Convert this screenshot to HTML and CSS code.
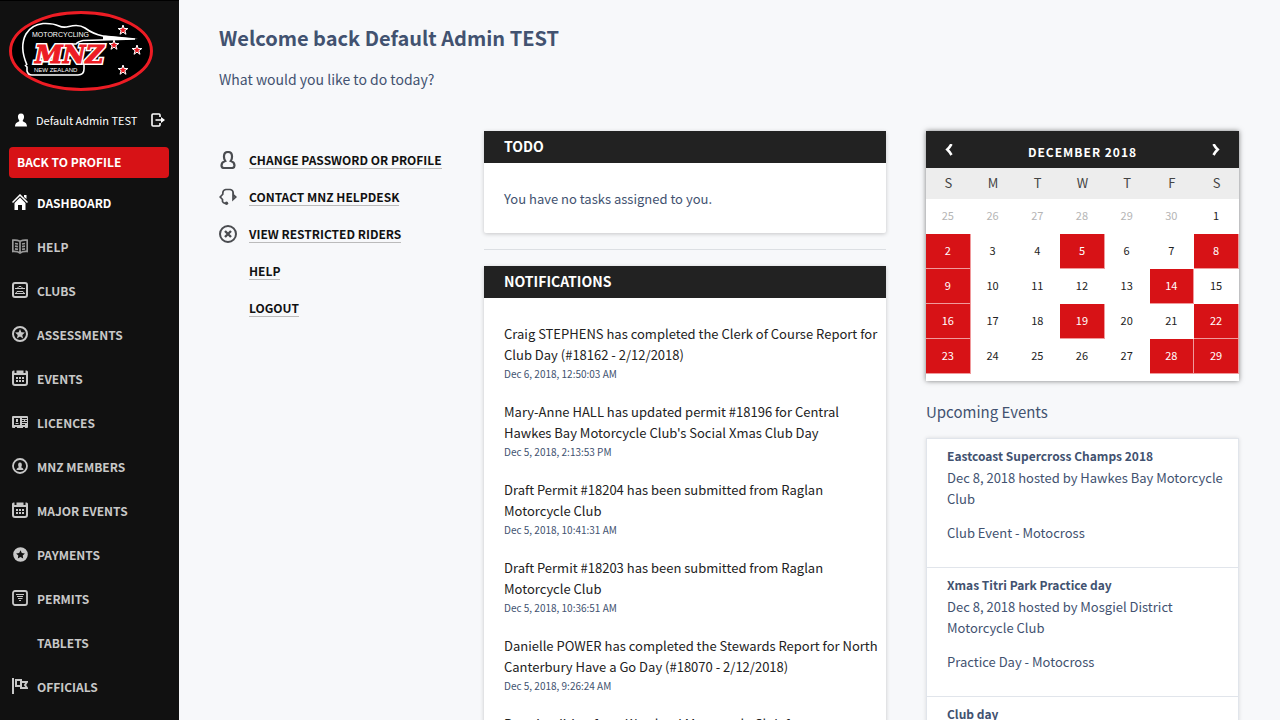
FILE: index.html
```html
<!DOCTYPE html>
<html lang="en">
<head>
<meta charset="utf-8">
<meta name="viewport" content="width=device-width, initial-scale=1">
<title>MNZ Dashboard</title>
<link rel="stylesheet" href="styles.css">
</head>
<body>
<svg class="sprite" aria-hidden="true">
  <symbol id="i-home" viewBox="0 0 16 16"><path fill="currentColor" d="M8 3.500 2.500 9v7H6v-5h4v5h3.500V9z"/><path fill="none" stroke="currentColor" stroke-width="1.500" d="M.5 8.500 8 1l7.500 7.500"/><path fill="currentColor" d="M12 1h2.500v4L12 3z"/></symbol>
  <symbol id="i-book" viewBox="0 0 16 16"><path fill="none" stroke="currentColor" stroke-width="1.700" d="M.8 2.200c3-.4 5 0 7.200 1 2.200-1 4.200-1.400 7.200-1V13.500c-3-.3-5 0-7.200 1.500-2.200-1.500-4.200-1.800-7.200-1.500zM8 3v12M3 5.500l3 .5M3 8.200l3 .5M3 10.900l3 .5M13 5.500l-3 .5M13 8.200l-3 .5M13 10.900l-3 .5"/></symbol>
  <symbol id="i-clubs" viewBox="0 0 16 16"><rect x="1" y="1" width="14" height="14" rx="2" fill="none" stroke="currentColor" stroke-width="2"/><path fill="none" stroke="currentColor" d="M3 6.500h10M5.500 6 7 4.500h2L10.500 6M3 11.500h10M4 11l1-1.500h6l1 1.500"/></symbol>
  <symbol id="i-star" viewBox="0 0 16 16"><circle cx="8" cy="8" r="7" fill="none" stroke="currentColor" stroke-width="2"/><path fill="currentColor" d="m8 3 1.400 3.200 3.500.4-2.600 2.300.8 3.500L8 10.600l-3.100 1.800.8-3.500-2.600-2.300 3.500-.4z"/></symbol>
  <symbol id="i-cal" viewBox="0 0 16 16"><path fill="none" stroke="currentColor" stroke-width="2" d="M1 3v10q0 2 2 2h10q2 0 2-2V3"/><path fill="currentColor" d="M0 2q0-1.500 1.500-1.500h1V3h2V.5h7V3h2V.5h1Q16 .5 16 2v3H0z"/><path fill="none" stroke="currentColor" stroke-width="2" stroke-dasharray="2 1" d="M4 8h8M4 11h8"/></symbol>
  <symbol id="i-card" viewBox="0 0 16 16"><path fill="currentColor" fill-rule="evenodd" d="M1 2h14q1 0 1 1v10q0 1-1 1h-2v-1h-2v1H5v-1H3v1H1q-1 0-1-1V3q0-1 1-1zm1 2v7h6V4zm8 0v1h5V4zm0 2v1h2V6zm3 0v1h2V6zm-3 2v1h5V8zm0 2v1h3v-1z"/><path fill="currentColor" d="M4 5h2v3H4zM3.500 9h3v1h-3z"/></symbol>
  <symbol id="i-member" viewBox="0 0 16 16"><circle cx="8" cy="8" r="7" fill="none" stroke="currentColor" stroke-width="1.800"/><path fill="currentColor" d="M8 4.500c1.700 0 2 1.500 1.800 3-.1.800-.5 1.100-.5 2 1 .5 2.200.7 2.200 2.500h-7c0-1.800 1.200-2 2.200-2.500 0-.9-.4-1.200-.5-2C6 6 6.300 4.500 8 4.500z"/></symbol>
  <symbol id="i-pay" viewBox="0 0 16 16"><path fill="currentColor" fill-rule="evenodd" d="M8.500 1.200a7.300 7.300 0 1 1 0 14.600 7.300 7.300 0 0 1 0-14.600zm0 3L7.200 7l-3.100.4 2.200 2.100-.5 3.100 2.700-1.500 2.700 1.500-.5-3.100 2.200-2.100L9.800 7z"/></symbol>
  <symbol id="i-permit" viewBox="0 0 16 16"><rect x="1" y="1" width="14" height="14" rx="2" fill="none" stroke="currentColor" stroke-width="1.800"/><path stroke="currentColor" d="M4 4.500h8M5 6.500h6M6 8.500h4.500M7 10.500h2"/></symbol>
  <symbol id="i-flag" viewBox="0 0 16 16"><path fill="none" stroke="currentColor" stroke-width="2" d="M1 0v16M4 2h5v6H4zM9 4h6l-2 3 2 3H9V4"/></symbol>
  <symbol id="i-user" viewBox="0 0 14 14"><path fill="currentColor" d="M7 .5c2.500 0 3.300 1.800 3 4-.2 1.500-.8 2.200-1.200 2.800v1C10 9.300 13 9.600 13 13.500H1c0-3.900 3-4.200 4.200-5.200v-1C4.800 6.700 4.200 6 4 4.500c-.3-2.200.5-4 3-4z"/></symbol>
  <symbol id="i-exit" viewBox="0 0 14 14"><path fill="none" stroke="currentColor" stroke-width="1.600" d="M9 4V2q0-1-1-1H2Q1 1 1 2v10q0 1 1 1h6q1 0 1-1v-2"/><path fill="currentColor" d="M4.500 6.200h5.500V4l4 3-4 3V7.800H4.500z"/></symbol>
  <symbol id="i-person" viewBox="0 0 18 18"><path fill="none" stroke="currentColor" stroke-width="2.200" d="M6.200 10Q4.800 8 5 5q.2-4 4-4t4 4q.2 3-1.200 5 3.700 1.200 3.700 4.500Q15.500 17 13 17H5q-2.500 0-2.500-2.500Q2.500 11.200 6.200 10z"/></symbol>
  <symbol id="i-headset" viewBox="0 0 18 18"><path fill="none" stroke="currentColor" stroke-width="1.700" d="M3.800 6.500V5q0-3 3-3.500h4.400q3 .5 3 3.500v1.500M4 6 1.200 9 4 12M14 6.500v5L16.800 9zM3.500 12v1.500Q4 15 6 15.300"/><circle cx="7.500" cy="15.300" r="1.700" fill="currentColor"/></symbol>
  <symbol id="i-cross" viewBox="0 0 18 18"><circle cx="9" cy="9" r="8" fill="none" stroke="currentColor" stroke-width="2"/><path stroke="currentColor" stroke-width="2.400" d="m6 6 6 6M12 6l-6 6"/></symbol>
  <symbol id="i-prev" viewBox="0 0 8 12"><path fill="none" stroke="currentColor" stroke-width="2.600" d="M6.500 0Q4.500 3.500 2.300 5.500q2.200 2 4.200 5.500"/></symbol>
  <symbol id="i-next" viewBox="0 0 8 12"><path fill="none" stroke="currentColor" stroke-width="2.600" d="M1.500 0q2 3.500 4.200 5.500-2.200 2-4.200 5.500"/></symbol>
</svg>

<div class="app">
  <aside class="sidebar">
    <svg class="logo" viewBox="0 0 144 80" role="img" aria-label="Motorcycling New Zealand">
      <ellipse cx="72" cy="40" rx="70.500" ry="38.500" fill="#000" stroke="#ed1c24" stroke-width="3"/>
      <path fill="none" stroke="#fff" stroke-width="1.600" d="M18 54Q10 36 17 23 22 14 34 12.500q10-.5 16 2.500 4 2 10 .5 10-2.500 16 1.500 8 6 18 8l32 3-52 1.500q-5 1-7 3.500h-7M16 54l2 2v4q1 4 5 4h46q6 0 6-6v-4"/>
      <path fill="#fff" d="m94 24.500 35 3.500-35 1z"/>
      <text class="logo-small" x="23" y="26">MOTORCYCLING</text>
      <text class="logo-small logo-tiny" x="25" y="61">NEW ZEALAND</text>
      <text class="logo-main logo-edge" x="26" y="52">MNZ</text>
      <text class="logo-main" x="26" y="52" aria-hidden="true">MNZ</text>
      <g fill="#ed1c24" stroke="#fff">
        <path id="star" d="m114 14 1.200 3.500h3.700l-3 2.200 1.100 3.600-3-2.200-3 2.200 1.100-3.600-3-2.200h3.700z"/>
        <use href="#star" x="-9" y="15"/><use href="#star" x="14" y="20"/><use href="#star" y="40"/>
      </g>
    </svg>
    <div class="user">
      <svg class="user-icon"><use href="#i-user"/></svg>
      <span class="user-name">Default Admin TEST</span>
      <a href="#" class="exit" aria-label="Log out"><svg class="user-icon"><use href="#i-exit"/></svg></a>
    </div>
    <a href="#" class="back">BACK TO PROFILE</a>
    <nav class="nav">
      <a href="#" class="nav-item current"><svg class="icon"><use href="#i-home"/></svg>DASHBOARD</a>
      <a href="#" class="nav-item"><svg class="icon dim"><use href="#i-book"/></svg>HELP</a>
      <a href="#" class="nav-item"><svg class="icon"><use href="#i-clubs"/></svg>CLUBS</a>
      <a href="#" class="nav-item"><svg class="icon"><use href="#i-star"/></svg>ASSESSMENTS</a>
      <a href="#" class="nav-item"><svg class="icon"><use href="#i-cal"/></svg>EVENTS</a>
      <a href="#" class="nav-item"><svg class="icon"><use href="#i-card"/></svg>LICENCES</a>
      <a href="#" class="nav-item"><svg class="icon"><use href="#i-member"/></svg>MNZ MEMBERS</a>
      <a href="#" class="nav-item"><svg class="icon"><use href="#i-cal"/></svg>MAJOR EVENTS</a>
      <a href="#" class="nav-item"><svg class="icon"><use href="#i-pay"/></svg>PAYMENTS</a>
      <a href="#" class="nav-item"><svg class="icon"><use href="#i-permit"/></svg>PERMITS</a>
      <a href="#" class="nav-item"><span class="icon"></span>TABLETS</a>
      <a href="#" class="nav-item"><svg class="icon"><use href="#i-flag"/></svg>OFFICIALS</a>
    </nav>
  </aside>

  <main class="main">
    <h1 class="title">Welcome back Default Admin TEST</h1>
    <p class="lead">What would you like to do today?</p>
    <div class="columns">
      <ul class="links">
        <li class="link-row"><svg class="link-icon"><use href="#i-person"/></svg><a href="#" class="link">CHANGE PASSWORD OR PROFILE</a></li>
        <li class="link-row"><svg class="link-icon"><use href="#i-headset"/></svg><a href="#" class="link">CONTACT MNZ HELPDESK</a></li>
        <li class="link-row"><svg class="link-icon"><use href="#i-cross"/></svg><a href="#" class="link">VIEW RESTRICTED RIDERS</a></li>
        <li class="link-row"><span class="link-icon"></span><a href="#" class="link">HELP</a></li>
        <li class="link-row"><span class="link-icon"></span><a href="#" class="link">LOGOUT</a></li>
      </ul>

      <div class="feed">
        <section class="card">
          <h2 class="card-title">TODO</h2>
          <div class="card-body"><p class="text">You have no tasks assigned to you.</p></div>
        </section>
        <hr class="rule">
        <section class="card">
          <h2 class="card-title">NOTIFICATIONS</h2>
          <div class="card-body notes">
            <article><p class="note">Craig STEPHENS has completed the Clerk of Course Report for Club Day (#18162 - 2/12/2018)</p><p class="date">Dec 6, 2018, 12:50:03 AM</p></article>
            <article><p class="note">Mary-Anne HALL has updated permit #18196 for Central Hawkes Bay Motorcycle Club's Social Xmas Club Day</p><p class="date">Dec 5, 2018, 2:13:53 PM</p></article>
            <article><p class="note">Draft Permit #18204 has been submitted from Raglan Motorcycle Club</p><p class="date">Dec 5, 2018, 10:41:31 AM</p></article>
            <article><p class="note">Draft Permit #18203 has been submitted from Raglan Motorcycle Club</p><p class="date">Dec 5, 2018, 10:36:51 AM</p></article>
            <article><p class="note">Danielle POWER has completed the Stewards Report for North Canterbury Have a Go Day (#18070 - 2/12/2018)</p><p class="date">Dec 5, 2018, 9:26:24 AM</p></article>
            <article><p class="note">Permit edition from Westland Motorcycle Club for</p></article>
          </div>
        </section>
      </div>

      <div class="agenda">
        <section class="calendar">
          <header class="cal-head">
            <button type="button" class="cal-btn" aria-label="Previous month"><svg class="arrow"><use href="#i-prev"/></svg></button>
            <h2 class="cal-title">DECEMBER 2018</h2>
            <button type="button" class="cal-btn" aria-label="Next month"><svg class="arrow"><use href="#i-next"/></svg></button>
          </header>
          <table class="days">
            <thead><tr><th>S</th><th>M</th><th>T</th><th>W</th><th>T</th><th>F</th><th>S</th></tr></thead>
            <tbody>
              <tr><td class="out">25</td><td class="out">26</td><td class="out">27</td><td class="out">28</td><td class="out">29</td><td class="out">30</td><td>1</td></tr>
              <tr><td class="on">2</td><td>3</td><td>4</td><td class="on">5</td><td>6</td><td>7</td><td class="on">8</td></tr>
              <tr><td class="on">9</td><td>10</td><td>11</td><td>12</td><td>13</td><td class="on">14</td><td>15</td></tr>
              <tr><td class="on">16</td><td>17</td><td>18</td><td class="on">19</td><td>20</td><td>21</td><td class="on">22</td></tr>
              <tr><td class="on">23</td><td>24</td><td>25</td><td>26</td><td>27</td><td class="on">28</td><td class="on">29</td></tr>
            </tbody>
          </table>
        </section>
        <h2 class="upcoming">Upcoming Events</h2>
        <div class="events">
          <article class="event"><h3 class="event-title">Eastcoast Supercross Champs 2018</h3><p class="text">Dec 8, 2018 hosted by Hawkes Bay Motorcycle Club</p><p class="text kind">Club Event - Motocross</p></article>
          <article class="event"><h3 class="event-title">Xmas Titri Park Practice day</h3><p class="text">Dec 8, 2018 hosted by Mosgiel District Motorcycle Club</p><p class="text kind">Practice Day - Motocross</p></article>
          <article class="event"><h3 class="event-title">Club day</h3></article>
        </div>
      </div>
    </div>
  </main>
</div>
</body>
</html>
```
FILE: styles.css
```css
* { box-sizing: border-box; }
body, h1, h2, h3, p, ul { margin: 0; padding: 0; }
body {
  font: 13px/21px "Noto Sans CJK SC", "Noto Sans", sans-serif;
  color: #425270;
  background: #f7f8fa;
}
a { color: inherit; text-decoration: none; }
svg { display: block; }
.sprite { position: absolute; width: 0; height: 0; }

.app { display: flex; height: 100vh; overflow: hidden; }

/* Sidebar */
.sidebar {
  flex: 0 0 179px;
  padding: 10px 10px 0 9px;
  background: #111;
  border-top: 1px solid #000;
  overflow: hidden;
}
.logo { width: 144px; height: 80px; }
.logo-small { font: 7px "Liberation Sans", sans-serif; fill: #fff; }
.logo-tiny { font-size: 6px; }
.logo-main {
  font: italic bold 25px "DejaVu Serif", serif;
  fill: #ed1c24;
  stroke: #ed1c24;
  stroke-width: 1px;
}
.logo-edge { stroke: #fff; stroke-width: 4px; }
.user {
  display: flex;
  align-items: center;
  height: 32px;
  margin: 13px 4px 11px 5px;
  font-size: 11px;
  color: #fff;
}
.user-icon { width: 14px; height: 14px; }
.user-name { margin-left: 8px; }
.exit { margin-left: auto; }
.back {
  display: block;
  padding: 0 8px 2px;
  font-size: 12px;
  font-weight: 700;
  line-height: 29px;
  color: #fff;
  background: #d71216;
  border-radius: 4px;
}
.nav { padding: 3px 0 0 3px; }
.nav-item {
  display: flex;
  align-items: center;
  gap: 9px;
  height: 44px;
  padding-bottom: 2px;
  font-size: 12px;
  font-weight: 700;
  color: #c8c8c8;
}
.icon { width: 16px; height: 16px; }
.dim { color: #999; }
.current { color: #fff; }

/* Main area */
.main { flex: 1; min-width: 0; padding: 23px 41px 0 40px; }
.title { font-size: 20px; line-height: 30px; }
.lead { margin-top: 14px; font-size: 14px; line-height: 24px; }
.columns {
  display: grid;
  grid-template-columns: minmax(0, 225fr) minmax(0, 402fr) minmax(0, 313fr);
  gap: 40px;
  align-items: start;
  margin-top: 40px;
}
.links { padding-top: 10px; list-style: none; }
.link-row { display: flex; align-items: center; gap: 12px; height: 37px; }
.link-icon { flex: none; width: 18px; height: 18px; color: #4a4c50; }
.link {
  padding-top: 1px;
  font-size: 12px;
  font-weight: 700;
  line-height: 17px;
  white-space: nowrap;
  color: #111;
  border-bottom: 1px solid #bbb;
}

.card {
  background: #fff;
  border-radius: 2px;
  box-shadow: 0 1px 4px rgba(0, 0, 0, 0.2);
}
.card-title {
  padding: 0 20px 2px;
  font-size: 14px;
  line-height: 30px;
  color: #fff;
  background: #222;
}
.card-body { padding: 25px 4px 24px 20px; }
.rule { height: 1px; margin: 16px 0; border: 0; background: #dcdfe3; }
.notes { display: grid; gap: 19px; }
.note { color: #222; }
.date { margin-top: 1px; font-size: 10px; line-height: 16px; }

/* Calendar */
.calendar {
  padding-bottom: 7px;
  background: #fff;
  box-shadow: 0 0 5px rgba(0, 0, 0, 0.5);
}
.cal-head {
  display: flex;
  align-items: center;
  justify-content: space-between;
  height: 37px;
  color: #fff;
  background: #222;
}
.cal-title { padding-top: 4px; font-size: 12px; letter-spacing: 1px; }
.cal-btn {
  display: grid;
  place-items: center;
  width: 46px;
  height: 37px;
  padding: 0;
  color: inherit;
  background: none;
  border: 0;
}
.arrow { width: 8px; height: 12px; }
.days {
  width: 100%;
  table-layout: fixed;
  border-collapse: separate;
  border-spacing: 0;
  text-align: center;
}
.days th {
  height: 31px;
  padding: 0 0 2px;
  font-size: 13px;
  font-weight: 400;
  color: #444;
  background: #ededed;
}
.days td {
  height: 35px;
  padding: 0 0 2px;
  font-size: 11px;
  color: #222;
  border: solid #fff;
  border-width: 0 1px 1px 0;
}
.days .out { color: #b5b5b5; }
.days .on { color: #fff; background: #d71216; border-color: #f09a9c; }

.upcoming { margin-top: 19px; font-size: 15px; font-weight: 400; line-height: 24px; }
.events {
  margin-top: 14px;
  background: #fff;
  border: 1px solid #e1e5eb;
  box-shadow: 0 0 4px rgba(0, 0, 0, 0.12);
}
.event { padding: 6px 8px 24px 20px; border-bottom: 1px solid #e1e5eb; }
.event-title { font-size: 12px; line-height: 22px; }
.kind { margin-top: 13px; }
```
